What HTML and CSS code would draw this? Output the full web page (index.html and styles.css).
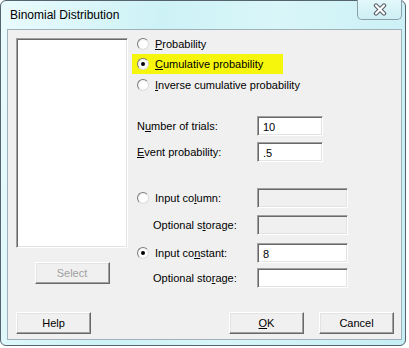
FILE: index.html
```html
<!DOCTYPE html>
<html lang="en">
<head>
    <meta charset="UTF-8">
    <title>Binomial Distribution</title>
    <link rel="stylesheet" href="styles.css">
</head>
<body>
    <div class="window">
        <div class="titlebar">
            <span class="title">Binomial Distribution</span>
            <div class="close">
                <svg width="16" height="13" viewBox="0 0 16 13">
                    <path d="M4 2.5 L12 10.5 M12 2.5 L4 10.5" stroke="#5a5f66" stroke-width="4.4" stroke-linecap="round"/>
                    <path d="M4 2.5 L12 10.5 M12 2.5 L4 10.5" stroke="#ffffff" stroke-width="2.2" stroke-linecap="round"/>
                </svg>
            </div>
        </div>
        <div class="client">
            <div class="main">
                <div class="left">
                    <div class="listbox"></div>
                    <button class="btn select" disabled>Select</button>
                </div>
                <div class="right">
                    <div class="radio-row"><span class="radio"></span><span><u>P</u>robability</span></div>
                    <div class="radio-row highlight"><span class="radio checked"></span><span><u>C</u>umulative probability</span></div>
                    <div class="radio-row"><span class="radio"></span><span><u>I</u>nverse cumulative probability</span></div>

                    <div class="field-row trials">
                        <span class="label">N<u>u</u>mber of trials:</span>
                        <input class="field short" value="10">
                    </div>
                    <div class="field-row event">
                        <span class="label"><u>E</u>vent probability:</span>
                        <input class="field short" value=".5">
                    </div>

                    <div class="field-row input-col">
                        <span class="label"><span class="radio"></span>Input co<u>l</u>umn:</span>
                        <input class="field long" disabled>
                    </div>
                    <div class="field-row storage1">
                        <span class="label sub">Optional s<u>t</u>orage:</span>
                        <input class="field long" disabled>
                    </div>
                    <div class="field-row input-const">
                        <span class="label"><span class="radio checked"></span>Input co<u>n</u>stant:</span>
                        <input class="field long" value="8">
                    </div>
                    <div class="field-row storage2">
                        <span class="label sub">Optional sto<u>r</u>age:</span>
                        <input class="field long">
                    </div>
                </div>
            </div>
            <div class="actions">
                <button class="btn">Help</button>
                <div class="spacer"></div>
                <button class="btn"><u>O</u>K</button>
                <button class="btn">Cancel</button>
            </div>
        </div>
    </div>
</body>
</html>
```

FILE: styles.css
```css
body {
    margin: 0;
    background-color: #fff;
    font-family: "Liberation Sans", Arial, sans-serif;
    font-size: 11px;
    color: #000;
}
.window {
    width: 406px;
    height: 346px;
    box-sizing: border-box;
    border: 1px solid #55636e;
    border-radius: 6px;
    padding: 0 3px 5px 6px;
    background: linear-gradient(100deg, #eafbfd 0%, #cdf2f6 35%, #d9f6f9 60%, #c6eef4 100%);
    display: flex;
    flex-direction: column;
}
.titlebar {
    height: 28px;
    display: flex;
    align-items: flex-start;
    position: relative;
}
.title {
    margin: 7px 0 0 3px;
    font-size: 12px;
    color: #000;
}
.close {
    position: absolute;
    right: 0;
    top: -1px;
    width: 45px;
    height: 20px;
    box-sizing: border-box;
    border: 1px solid #8e9ea8;
    border-top: none;
    border-radius: 0 0 5px 5px;
    background: linear-gradient(#e2f8fb, #cdeff4);
    display: flex;
    align-items: center;
    justify-content: center;
}
.client {
    flex: 1;
    border: 1px solid #9fb1ba;
    background-color: #f0f0f0;
    display: flex;
    flex-direction: column;
}
.main {
    display: flex;
    padding: 4px 0 0 8px;
}
.left {
    width: 112px;
    margin-top: 4px;
    display: flex;
    flex-direction: column;
    align-items: center;
}
.listbox {
    width: 112px;
    height: 210px;
    box-sizing: border-box;
    background-color: #fff;
    border: 1px solid;
    border-color: #a0a0a0 #fff #fff #a0a0a0;
    box-shadow: inset 1px 1px 0 #696969, inset -1px -1px 0 #e3e3e3;
}
.btn {
    width: 75px;
    height: 22px;
    padding: 0;
    font-family: inherit;
    font-size: 11px;
    color: #000;
    background-color: #f0f0f0;
    border: 1px solid;
    border-color: #fff #696969 #696969 #fff;
    box-shadow: inset -1px -1px 0 #a0a0a0, inset 1px 1px 0 #e3e3e3;
}
.select {
    margin-top: 14px;
    color: #a0a0a0;
}
.right {
    margin-left: 4px;
    display: flex;
    flex-direction: column;
}
.radio-row {
    height: 20px;
    width: 151px;
    display: flex;
    align-items: center;
    padding-left: 5px;
    box-sizing: border-box;
    white-space: nowrap;
}
.radio-row:nth-child(3) {
    margin-top: 1px;
}
.highlight {
    background-color: #f6f60c;
}
.radio {
    width: 12px;
    height: 12px;
    box-sizing: border-box;
    border-radius: 50%;
    border: 1px solid;
    border-color: #7d7d7d #dcdcdc #dcdcdc #7d7d7d;
    background: radial-gradient(circle at 60% 60%, #fff 40%, #e8e8e8 100%);
    margin-right: 6px;
    display: inline-flex;
    align-items: center;
    justify-content: center;
    flex: none;
}
.radio.checked::after {
    content: "";
    width: 4px;
    height: 4px;
    border-radius: 50%;
    background-color: #000;
}
.field-row {
    height: 20px;
    display: flex;
    align-items: center;
    padding-left: 5px;
}
.label {
    width: 120px;
    display: flex;
    align-items: center;
    white-space: nowrap;
}
.label.sub {
    padding-left: 16px;
    width: 104px;
}
.trials { margin-top: 21px; }
.event { margin-top: 6px; }
.input-col { margin-top: 26px; }
.storage1 { margin-top: 7px; }
.input-const { margin-top: 8px; }
.storage2 { margin-top: 5px; }
.field {
    height: 20px;
    box-sizing: border-box;
    padding: 1px 0 0 5px;
    font-family: inherit;
    font-size: 11px;
    color: #000;
    background-color: #fff;
    border: 1px solid;
    border-color: #a0a0a0 #fff #fff #a0a0a0;
    box-shadow: inset 1px 1px 0 #696969, inset -1px -1px 0 #e3e3e3;
    outline: none;
}
.field:disabled {
    background-color: #f0f0f0;
}
.short { width: 66px; }
.long { width: 91px; }
.actions {
    margin-top: auto;
    display: flex;
    padding: 0 7px 5px 8px;
}
.spacer { flex: 1; }
.actions .btn + .btn {
    margin-left: 15px;
}
```
